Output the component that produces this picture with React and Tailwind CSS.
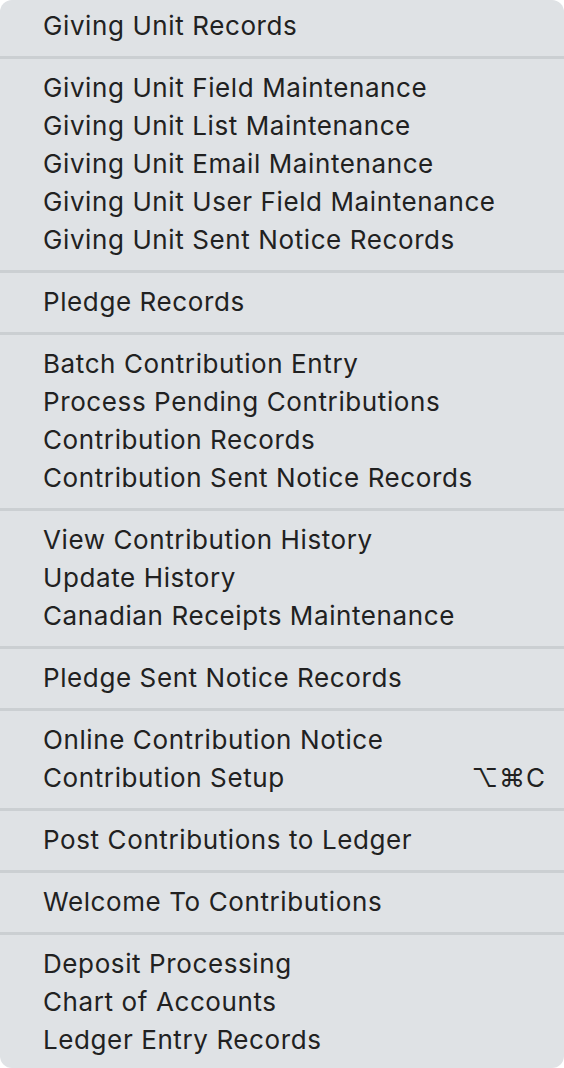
import React from "react";

const groups = [
  [{ label: "Giving Unit Records" }],
  [
    { label: "Giving Unit Field Maintenance" },
    { label: "Giving Unit List Maintenance" },
    { label: "Giving Unit Email Maintenance" },
    { label: "Giving Unit User Field Maintenance" },
    { label: "Giving Unit Sent Notice Records" },
  ],
  [{ label: "Pledge Records" }],
  [
    { label: "Batch Contribution Entry" },
    { label: "Process Pending Contributions" },
    { label: "Contribution Records" },
    { label: "Contribution Sent Notice Records" },
  ],
  [
    { label: "View Contribution History" },
    { label: "Update History" },
    { label: "Canadian Receipts Maintenance" },
  ],
  [{ label: "Pledge Sent Notice Records" }],
  [
    { label: "Online Contribution Notice" },
    { label: "Contribution Setup", shortcut: "⌥⌘C" },
  ],
  [{ label: "Post Contributions to Ledger" }],
  [{ label: "Welcome To Contributions" }],
  [
    { label: "Deposit Processing" },
    { label: "Chart of Accounts" },
    { label: "Ledger Entry Records" },
  ],
];

export default function App() {
  return (
    <div
      className="w-[564px] h-[1068px] bg-[#dfe2e5] rounded-[12px] pt-[7px] text-[#212121] overflow-hidden"
      style={{ fontFamily: "Inter, 'Noto Sans', sans-serif" }}
    >
      {groups.map((g, gi) => (
        <React.Fragment key={gi}>
          {gi > 0 && (
            <div className="h-[24px] flex flex-col pt-[11px]">
              <div className="h-[3px] bg-[#cbcfd2]" />
            </div>
          )}
          {g.map((it) => (
            <div
              key={it.label}
              className="h-[38px] flex items-center justify-between pl-[43px] pr-[18px] text-[26px] leading-[38px] tracking-[0.6px]"
            >
              <span>{it.label}</span>
              {it.shortcut && <span className="tracking-[1px]">{it.shortcut}</span>}
            </div>
          ))}
        </React.Fragment>
      ))}
    </div>
  );
}
